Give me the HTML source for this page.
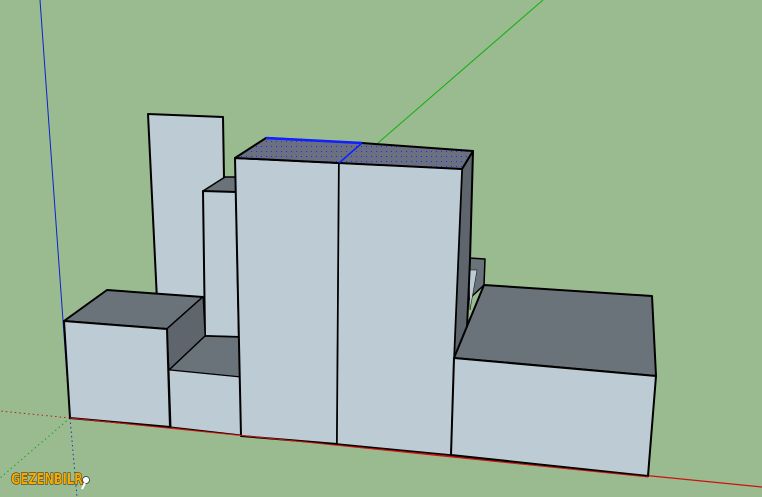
<!DOCTYPE html>
<html><head><style>html,body{margin:0;padding:0;background:#9aba8f;}svg{display:block}</style></head><body>
<svg width="762" height="497" viewBox="0 0 762 497" xmlns="http://www.w3.org/2000/svg">
<defs>
<pattern id="dots" width="5" height="5" patternUnits="userSpaceOnUse">
<rect width="5" height="5" fill="#6a7080"/><rect x="1" y="1" width="1" height="1" fill="#1a2cff"/>
</pattern>
</defs>
<rect width="762" height="497" fill="#9aba8f"/>
<line x1="40" y1="0" x2="70" y2="418" stroke="#1020d0" stroke-width="1"/>
<line x1="378" y1="143" x2="543" y2="0" stroke="#10b010" stroke-width="1"/>
<line x1="70" y1="418" x2="762" y2="487" stroke="#d01010" stroke-width="1.2"/>
<line x1="70" y1="418" x2="0" y2="411" stroke="#b02020" stroke-dasharray="1.5,3"/>
<line x1="70" y1="418" x2="0" y2="478" stroke="#20a020" stroke-dasharray="1.5,3"/>
<line x1="70" y1="418" x2="77" y2="497" stroke="#2030c0" stroke-dasharray="1.5,3"/>
<g stroke="#000" stroke-linejoin="round">
<polygon points="148,114 223,117 226,300 157,300" fill="#bccbd4" stroke-width="2"/>
<polygon points="203,191 225,177 236,177 236,192" fill="#6b737a" stroke-width="1.5"/>
<polygon points="203,191 236,192 239,337 205,336" fill="#bccbd4" stroke-width="2"/>
<polygon points="469,258 485,259 484,285 468,300" fill="#6b737a" stroke-width="1.5"/>
<polygon points="469,270 477,270 470,310" fill="#bccbd4" stroke-width="0.5"/>
<polygon points="64,321 107,290 203,297 167,329" fill="#6b737a" stroke-width="2"/>
<polygon points="167,329 203,297 205,336 169,370" fill="#5e656c" stroke-width="1"/>
<polygon points="169,370 205,336 239,337 240,377" fill="#6b737a" stroke-width="1.5"/>
<polygon points="64,321 167,329 170,427 70,418" fill="#bccbd4" stroke-width="2"/>
<polygon points="169,370 240,377 241,435 171,427" fill="#bccbd4" stroke-width="1"/>
<polygon points="462,169 473,151 470,260 467,328 454,358" fill="#5e656c" stroke-width="2"/>
<polygon points="235,158 339,163 337,444 241,436" fill="#bccbd4" stroke-width="2"/>
<polygon points="339,163 462,169 454,358 451,455 337,444" fill="#bccbd4" stroke-width="1.5"/>
<polygon points="235,158 266,138 362,143 473,151 462,169 339,163" fill="url(#dots)" stroke-width="2"/>
<line x1="266" y1="138" x2="362" y2="143" stroke="#1020ff" stroke-width="2.5"/>
<line x1="362" y1="143" x2="339" y2="163" stroke="#1020ff" stroke-width="1.5"/>
<line x1="339" y1="163" x2="337" y2="444" stroke-width="1"/>
<polygon points="454,358 484,285 652,296 656,376" fill="#6b737a" stroke-width="2"/>
<polygon points="454,358 656,376 648,476 451,455" fill="#bccbd4" stroke-width="2"/>
</g>
<line x1="70" y1="418" x2="648" y2="477" stroke="#d01010" stroke-width="1"/>
<text x="11" y="484" font-family="DejaVu Sans, sans-serif" font-weight="bold" font-size="15" fill="#f7a900" stroke="#2a2000" stroke-width="1" paint-order="stroke" textLength="72" lengthAdjust="spacingAndGlyphs">GEZENBILR</text>
<circle cx="86" cy="480" r="3.5" fill="#fff" stroke="#333" stroke-width="0.8"/>
<line x1="85" y1="483" x2="82" y2="489" stroke="#fff" stroke-width="2"/>
</svg>
</body></html>
